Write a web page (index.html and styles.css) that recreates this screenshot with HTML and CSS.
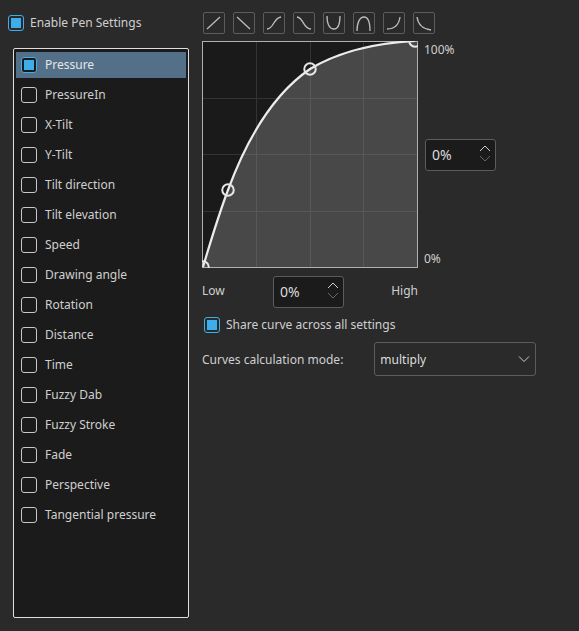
FILE: index.html
```html
<!DOCTYPE html>
<html lang="en">
<head>
<meta charset="utf-8">
<title>Pen Settings</title>
<link rel="stylesheet" href="styles.css">
</head>
<body>
<div class="page">
  <div class="left">
    <label class="enable"><span class="check on"></span>Enable Pen Settings</label>
    <div class="list">
      <div class="row selected"><span class="check on dark"></span>Pressure</div>
      <div class="row"><span class="check"></span>PressureIn</div>
      <div class="row"><span class="check"></span>X-Tilt</div>
      <div class="row"><span class="check"></span>Y-Tilt</div>
      <div class="row"><span class="check"></span>Tilt direction</div>
      <div class="row"><span class="check"></span>Tilt elevation</div>
      <div class="row"><span class="check"></span>Speed</div>
      <div class="row"><span class="check"></span>Drawing angle</div>
      <div class="row"><span class="check"></span>Rotation</div>
      <div class="row"><span class="check"></span>Distance</div>
      <div class="row"><span class="check"></span>Time</div>
      <div class="row"><span class="check"></span>Fuzzy Dab</div>
      <div class="row"><span class="check"></span>Fuzzy Stroke</div>
      <div class="row"><span class="check"></span>Fade</div>
      <div class="row"><span class="check"></span>Perspective</div>
      <div class="row"><span class="check"></span>Tangential pressure</div>
    </div>
  </div>
  <div class="right">
    <div class="presets">
      <div class="preset"><svg viewBox="0 0 20 20"><path d="M3 16 16 4"/></svg></div>
      <div class="preset"><svg viewBox="0 0 20 20"><path d="M3 4 16 16"/></svg></div>
      <div class="preset"><svg viewBox="0 0 20 20"><path d="M3 16C10 16 9 5 17 4"/></svg></div>
      <div class="preset"><svg viewBox="0 0 20 20"><path d="M3 4C10 5 9 16 17 16"/></svg></div>
      <div class="preset"><svg viewBox="0 0 20 20"><path d="M3 3C3 12 6 16 10 16S16 12 16 3"/></svg></div>
      <div class="preset"><svg viewBox="0 0 20 20"><path d="M3 18C3 9 6 4 10 4S16 9 16 18"/></svg></div>
      <div class="preset"><svg viewBox="0 0 20 20"><path d="M3 16C11 16 15 11 16 4"/></svg></div>
      <div class="preset"><svg viewBox="0 0 20 20"><path d="M3 4C4 11 9 16 17 17"/></svg></div>
    </div>
    <div class="graph-row">
      <svg class="graph" width="216" height="227" viewBox="0 0 216 227">
        <clipPath id="fillclip"><path d="M1 226C9 199 17 173 26 149C47 92 73 52 108 28C138 10 175 2 213 0L215 0V226Z"/></clipPath>
        <rect class="g-bg" x="0" y="0" width="216" height="227"/>
        <path class="g-grid-dark" d="M54.500 0V227M108.500 0V227M161.500 0V227M0 57.500H216M0 113.500H216M0 170.500H216"/>
        <path class="g-fill" d="M1 226C9 199 17 173 26 149C47 92 73 52 108 28C138 10 175 2 213 0L215 0V226Z"/>
        <path class="g-grid-light" clip-path="url(#fillclip)" d="M54.500 0V227M108.500 0V227M161.500 0V227M0 57.500H216M0 113.500H216M0 170.500H216"/>
        <rect class="g-frame" x="0.500" y="0.500" width="215" height="226"/>
        <path class="g-curve" d="M1 226C9 199 17 173 26 149C47 92 73 52 108 28C138 10 175 2 213 0"/>
        <circle class="g-handle" cx="26" cy="149" r="5.750"/>
        <circle class="g-handle" cx="108" cy="28" r="5.750"/>
        <circle class="g-handle" cx="213" cy="0" r="5.750"/>
        <circle class="g-handle" cx="1" cy="226" r="5.750"/>
      </svg>
      <div class="side">
        <span class="small">100%</span>
        <div class="spin"><span>0%</span><svg class="arrows" width="14" height="22" viewBox="0 0 14 22"><path class="up" d="M2 7 7 2 12 7"/><path class="down" d="M2 12 7 17 12 12"/></svg></div>
        <span class="small">0%</span>
      </div>
    </div>
    <div class="low-row">
      <span class="low-label">Low</span>
      <div class="spin"><span>0%</span><svg class="arrows" width="14" height="22" viewBox="0 0 14 22"><path class="up" d="M2 7 7 2 12 7"/><path class="down" d="M2 12 7 17 12 12"/></svg></div>
      <span class="low-label">High</span>
    </div>
    <label class="share"><span class="check on"></span>Share curve across all settings</label>
    <div class="mode-row">
      <span class="mode-label">Curves calculation mode:</span>
      <div class="combo"><span class="combo-value">multiply</span><svg width="12" height="8" viewBox="0 0 12 8"><path d="M1 1.500 6 6.500 11 1.500"/></svg></div>
    </div>
  </div>
</div>
</body>
</html>
```
FILE: styles.css
```css
* { box-sizing: border-box; }
html, body { margin: 0; height: 100%; background: #2a2a2a; }
body { font: 12px/16px "Noto Sans", sans-serif; color: #cfcfcf; }
.page { display: flex; height: 631px; }
.left { width: 202px; flex: none; padding: 15px 13px 13px 8px; display: flex; flex-direction: column; }
.enable, .share { display: flex; align-items: center; gap: 6px; height: 16px; }
.list {
  margin: 17px 0 0 5px; height: 570px; padding: 3px 2px;
  background: #1b1b1b; border: 1px solid #e0e0e0; border-radius: 2px;
}
.row { display: flex; align-items: center; gap: 8px; height: 30px; padding-left: 5px; }
.row.selected { height: 26px; margin: 0 0 2px; background: #547089; color: #e6e6e6; }
.check {
  display: block; flex: none; width: 16px; height: 16px;
  border: 1px solid #c8c8c8; border-radius: 3px;
}
.check.on { border-color: #3daee9; padding: 2px; background: #2a2a2a content-box; }
.check.on::before { content: ""; display: block; width: 100%; height: 100%; background: #3daee9; }
.check.dark { background: #1b1b1b; }
.right { flex: none; display: flex; flex-direction: column; padding-top: 12px; }
.presets { display: flex; gap: 8px; padding-left: 1px; }
.preset { width: 22px; height: 22px; border: 1px solid #5c5c5c; border-radius: 2px; }
.preset svg { display: block; width: 20px; height: 20px; fill: none; stroke: #bdbdbd; stroke-width: 1.300; }
.graph-row { display: flex; margin-top: 7px; height: 227px; }
.graph { display: block; flex: none; }
.g-bg { fill: #1a1a1a; }
.g-fill { fill: #484848; }
.g-grid-dark { stroke: #333; fill: none; }
.g-grid-light { stroke: #585858; fill: none; }
.g-frame { fill: none; stroke: #b0b0b0; }
.g-curve { fill: none; stroke: #ececec; stroke-width: 2.200; }
.g-handle { fill: none; stroke: #e6e6e6; stroke-width: 2; }
.side { display: flex; flex-direction: column; align-items: flex-start; padding-left: 7px; }
.small { flex: none; line-height: 18px; margin-left: -1px; }
.side .spin { flex: none; margin-top: 80px; }
.side .small:last-child { margin-top: 79px; }
.spin {
  display: flex; align-items: center; justify-content: space-between;
  width: 71px; height: 32px; padding: 0 3px 0 6px; font-size: 14px;
  background: #1b1b1b; border: 1px solid #5c5c5c; border-radius: 3px; color: #dcdcdc;
}
.arrows { fill: none; }
.arrows .up { stroke: #d0d0d0; }
.arrows .down { stroke: #666; }
.low-row { display: flex; align-items: center; justify-content: space-between; width: 216px; height: 32px; margin-top: 8px; }
.low-row .spin { margin-left: 1px; }
.low-label { padding-bottom: 2px; }
.share { margin: 9px 0 0 2px; }
.mode-row { display: flex; align-items: center; gap: 31px; margin-top: 9px; }
.mode-label, .combo-value { padding-top: 2px; }
.combo {
  display: flex; align-items: center; justify-content: space-between;
  width: 162px; height: 34px; padding: 0 5px;
  border: 1px solid #5c5c5c; border-radius: 3px; color: #dcdcdc;
}
.combo svg { fill: none; stroke: #d0d0d0; }
```
